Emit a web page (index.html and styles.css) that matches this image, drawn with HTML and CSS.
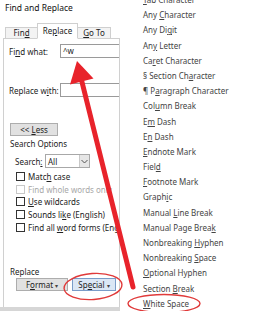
FILE: index.html
```html
<!DOCTYPE html>
<html lang="en">
<head>
    <meta charset="UTF-8">
    <title>Find and Replace</title>
    <link rel="stylesheet" href="styles.css">
</head>
<body>
    <div class="screen">
        <div class="dialog">
            <div class="title">Find and Replace</div>

            <div class="tabs">
                <div class="tab tab-find">Fin<u>d</u></div>
                <div class="tab tab-replace active">Re<u>p</u>lace</div>
                <div class="tab tab-goto"><u>G</u>o To</div>
            </div>

            <div class="panel">
                <div class="field-row find-row">
                    <label>Fi<u>n</u>d what:</label>
                    <div class="input">^w</div>
                </div>

                <div class="field-row replace-row">
                    <label>Replace w<u>i</u>th:</label>
                    <div class="input"></div>
                </div>

                <div class="btn less-btn">&lt;&lt; <u>L</u>ess</div>

                <div class="group-label">Search Options</div>

                <div class="search-row">
                    <label>Search<u>:</u></label>
                    <div class="select">
                        <span>All</span>
                        <span class="select-arrow">
                            <svg width="7" height="5" viewBox="0 0 7 5"><path d="M0.5 1 L3.5 4 L6.5 1" fill="none" stroke="#555" stroke-width="1"/></svg>
                        </span>
                    </div>
                </div>

                <div class="checks">
                    <div class="check"><span class="box"></span><span>Matc<u>h</u> case</span></div>
                    <div class="check disabled"><span class="box"></span><span>Find whole words only</span></div>
                    <div class="check"><span class="box"></span><span><u>U</u>se wildcards</span></div>
                    <div class="check"><span class="box"></span><span>Sounds li<u>k</u>e (English)</span></div>
                    <div class="check"><span class="box"></span><span>Find all <u>w</u>ord forms (English)</span></div>
                </div>

                <div class="group-label replace-group">Replace</div>

                <div class="bottom-buttons">
                    <div class="btn format-btn">F<u>o</u>rmat <span class="caret">▾</span></div>
                    <div class="btn special-btn">Sp<u>e</u>cial <span class="caret">▾</span></div>
                </div>
            </div>
        </div>

        <ul class="menu">
            <li><u>T</u>ab Character</li>
            <li>Any <u>C</u>haracter</li>
            <li>Any Di<u>g</u>it</li>
            <li>An<u>y</u> Letter</li>
            <li>Ca<u>r</u>et Character</li>
            <li>§ Section Ch<u>a</u>racter</li>
            <li>¶ P<u>a</u>ragraph Character</li>
            <li>Col<u>u</u>mn Break</li>
            <li>E<u>m</u> Dash</li>
            <li>E<u>n</u> Dash</li>
            <li><u>E</u>ndnote Mark</li>
            <li>Fiel<u>d</u></li>
            <li><u>F</u>ootnote Mark</li>
            <li>Graph<u>i</u>c</li>
            <li>Manual <u>L</u>ine Break</li>
            <li>Manual Page Brea<u>k</u></li>
            <li>Nonbreaking <u>H</u>yphen</li>
            <li>Nonbreaking <u>S</u>pace</li>
            <li><u>O</u>ptional Hyphen</li>
            <li>Section <u>B</u>reak</li>
            <li><u>W</u>hite Space</li>
        </ul>

        <svg class="markup" width="257" height="311" viewBox="0 0 257 311">
            <line x1="133" y1="287" x2="81" y2="78" stroke="#e8232b" stroke-width="5" stroke-linecap="round"/>
            <polygon points="77,61 93.5,78.5 70,84.5" fill="#e8232b"/>
            <ellipse cx="93" cy="286.5" rx="29" ry="13" fill="none" stroke="#e03a3a" stroke-width="1.4" transform="rotate(-4 93 286.5)"/>
            <ellipse cx="164" cy="303.5" rx="36" ry="9" fill="none" stroke="#e03a3a" stroke-width="1.4"/>
        </svg>
    </div>
</body>
</html>
```

FILE: styles.css
```css
* {
    box-sizing: border-box;
}

body {
    margin: 0;
    background: #fff;
    font-family: "Noto Sans", "Open Sans", sans-serif;
    font-size: 8px;
    color: #222;
}

u {
    text-decoration: underline;
    text-underline-offset: 1px;
}

.screen {
    position: relative;
    width: 257px;
    height: 311px;
    overflow: hidden;
    display: flex;
}

/* dialog on the left */
.dialog {
    width: 120px;
    height: 311px;
    flex-shrink: 0;
    display: flex;
    flex-direction: column;
    background: #fff;
    border-bottom: 4px solid #d6d6d6;
}

.title {
    height: 23px;
    padding: 2px 0 0 5px;
    font-size: 8.5px;
    color: #111;
}

.tabs {
    display: flex;
    align-items: flex-end;
    height: 15px;
    padding-left: 5px;
    position: relative;
    z-index: 1;
}

.tab {
    height: 11px;
    line-height: 10px;
    padding: 0;
    border: 1px solid #cfcfcf;
    border-bottom: none;
    background: #f3f3f3;
    text-align: center;
    white-space: nowrap;
}

.tab-find {
    width: 33px;
}

.tab-replace {
    width: 41px;
}

.tab-goto {
    width: 34px;
}

.tab.active {
    height: 16px;
    line-height: 14px;
    background: #fff;
    margin: 0 -1px -1px;
    border-bottom: 1px solid #fff;
}

.panel {
    flex: 1;
    margin-left: 3px;
    border-left: 1px solid #d0d0d0;
    border-top: 1px solid #d0d0d0;
    border-right: 1px solid #d0d0d0;
    padding: 5px 0 0 5px;
}

.field-row {
    display: flex;
    align-items: center;
    height: 14px;
}

.field-row label {
    width: 51px;
}

.input {
    flex: 1;
    height: 14px;
    border: 1px solid #9a9a9a;
    border-right: none;
    padding-left: 2px;
    line-height: 12px;
    background: #fff;
}

.replace-row {
    margin-top: 25px;
}

.btn {
    height: 13px;
    line-height: 11px;
    border: 1px solid #adadad;
    background: #e1e1e1;
    text-align: center;
    white-space: nowrap;
}

.less-btn {
    width: 48px;
    margin-top: 26px;
    margin-left: 1px;
}

.group-label {
    margin-top: 3px;
    height: 10px;
    line-height: 10px;
    padding-left: 1px;
}

.search-row {
    display: flex;
    align-items: center;
    margin-top: 5px;
    padding-left: 6px;
}

.search-row label {
    width: 30px;
}

.select {
    width: 45px;
    height: 14px;
    border: 1px solid #a8a8a8;
    display: flex;
    align-items: center;
    justify-content: space-between;
    padding-left: 2px;
    background: #fff;
}

.select-arrow {
    width: 10px;
    height: 12px;
    background: #e6e6e6;
    border-left: 1px solid #c8c8c8;
    display: flex;
    align-items: center;
    justify-content: center;
}

.checks {
    margin-top: 2px;
    padding-left: 7px;
}

.check {
    display: flex;
    align-items: center;
    height: 12.75px;
    white-space: nowrap;
}

.check .box {
    width: 9px;
    height: 9px;
    border: 1px solid #333;
    background: #fff;
    margin-right: 3px;
    flex-shrink: 0;
}

.check.disabled {
    color: #a8a8a8;
}

.check.disabled .box {
    border-color: #c8c8c8;
}

.replace-group {
    margin-top: 33px;
}

.bottom-buttons {
    display: flex;
    gap: 4px;
    margin-top: 1px;
    padding-left: 7px;
}

.format-btn {
    width: 52px;
}

.special-btn {
    width: 44px;
    background: #dbe7f5;
    border-color: #7a9cc8;
}

.caret {
    font-size: 6px;
    color: #444;
}

/* special menu on the right */
.menu {
    flex: 1;
    list-style: none;
    margin: -8px 0 0;
    padding: 0 0 0 23px;
    background: #fff;
    color: #444;
}

.menu li {
    height: 15.2px;
    line-height: 15.2px;
    white-space: nowrap;
}

/* red hand-drawn markup over the screenshot */
.markup {
    position: absolute;
    left: 0;
    top: 0;
    pointer-events: none;
}
```
